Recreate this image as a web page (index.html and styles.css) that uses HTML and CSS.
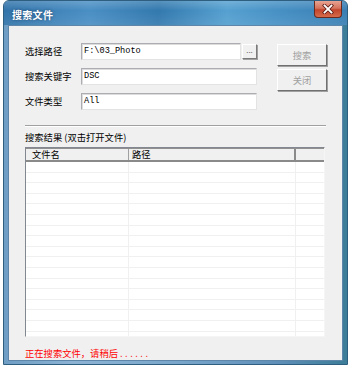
FILE: index.html
```html
<!DOCTYPE html>
<html>
<head>
<meta charset="utf-8">
<link rel="stylesheet" href="styles.css">
</head>
<body>
<div class="window">
  <div class="titlebar">
    <span class="title">搜索文件</span>
    <div class="close">
      <svg width="14" height="10" viewBox="0 0 14 10">
        <path d="M3.5 1.5 L10.5 8.5 M10.5 1.5 L3.5 8.5" stroke="#5a1a14" stroke-width="3.4" stroke-linecap="square"/>
        <path d="M3.5 1.5 L10.5 8.5 M10.5 1.5 L3.5 8.5" stroke="#ffffff" stroke-width="1.8" stroke-linecap="square"/>
      </svg>
    </div>
  </div>
  <div class="client">
    <div class="form">
      <div class="fields">
        <label class="lbl">选择路径</label>
        <div class="pathrow">
          <div class="input short">F:\03_Photo</div>
          <div class="browse">...</div>
        </div>
        <label class="lbl">搜索关键字</label>
        <div class="input">DSC</div>
        <label class="lbl">文件类型</label>
        <div class="input">All</div>
      </div>
      <div class="buttons">
        <div class="btn">搜索</div>
        <div class="btn">关闭</div>
      </div>
    </div>
    <div class="sep"></div>
    <div class="reslabel">搜索结果 (双击打开文件)</div>
    <div class="table">
      <div class="thead">
        <div class="th c1">文件名</div>
        <div class="th c2">路径</div>
        <div class="th c3"></div>
      </div>
      <div class="tbody">
        <div class="tr"><div class="td c1"></div><div class="td c2"></div><div class="td c3"></div></div>
        <div class="tr"><div class="td c1"></div><div class="td c2"></div><div class="td c3"></div></div>
        <div class="tr"><div class="td c1"></div><div class="td c2"></div><div class="td c3"></div></div>
        <div class="tr"><div class="td c1"></div><div class="td c2"></div><div class="td c3"></div></div>
        <div class="tr"><div class="td c1"></div><div class="td c2"></div><div class="td c3"></div></div>
        <div class="tr"><div class="td c1"></div><div class="td c2"></div><div class="td c3"></div></div>
        <div class="tr"><div class="td c1"></div><div class="td c2"></div><div class="td c3"></div></div>
        <div class="tr"><div class="td c1"></div><div class="td c2"></div><div class="td c3"></div></div>
        <div class="tr"><div class="td c1"></div><div class="td c2"></div><div class="td c3"></div></div>
        <div class="tr"><div class="td c1"></div><div class="td c2"></div><div class="td c3"></div></div>
        <div class="tr"><div class="td c1"></div><div class="td c2"></div><div class="td c3"></div></div>
        <div class="tr"><div class="td c1"></div><div class="td c2"></div><div class="td c3"></div></div>
        <div class="tr"><div class="td c1"></div><div class="td c2"></div><div class="td c3"></div></div>
        <div class="tr"><div class="td c1"></div><div class="td c2"></div><div class="td c3"></div></div>
        <div class="tr"><div class="td c1"></div><div class="td c2"></div><div class="td c3"></div></div>
        <div class="tr"><div class="td c1"></div><div class="td c2"></div><div class="td c3"></div></div>
        <div class="tr"><div class="td c1"></div><div class="td c2"></div><div class="td c3"></div></div>
      </div>
    </div>
    <div class="status">正在搜索文件，请稍后<span class="dots">......</span></div>
  </div>
</div>
</body>
</html>
```
FILE: styles.css
```css
* { box-sizing: border-box; }
body {
  margin: 0;
  background: #ffffff;
  font-family: "Noto Sans CJK SC", "Liberation Sans", sans-serif;
  font-size: 9.3px;
  color: #000;
}
.window {
  margin-left: 3px;
  width: 345px;
  height: 365px;
  border: 1px solid #2e5f80;
  border-radius: 6px 6px 0 0;
  background: linear-gradient(to right, #6f9dc4 0%, #8db3d3 20%, #7aa6cb 50%, #5f8fb8 80%, #3c7d98 100%);
  padding: 0 4px 3px 4px;
  display: flex;
  flex-direction: column;
}
.titlebar {
  height: 24px;
  margin: 0 -4px;
  padding: 0 4px 0 8px;
  border-radius: 5px 5px 0 0;
  background:
    linear-gradient(to bottom, rgba(255,255,255,0.18), rgba(255,255,255,0) 40%, rgba(255,255,255,0.08)),
    linear-gradient(to right, #3274aa 0%, #4a8fc4 25%, #3379ae 45%, #55a0d0 65%, #4690c4 80%, #3a7fb3 100%);
  display: flex;
  align-items: center;
  justify-content: space-between;
}
.title {
  color: #ffffff;
  font-weight: bold;
  font-size: 10px;
  letter-spacing: 0.3px;
  text-shadow: 0 0 3px rgba(20,50,90,0.8);
  margin-top: 2px;
}
.close {
  align-self: flex-start;
  width: 28px;
  height: 17px;
  margin-right: 1px;
  border: 1px solid #6a2a20;
  border-top: none;
  border-radius: 0 0 4px 4px;
  background: linear-gradient(to bottom, #e8a493 0%, #d4735c 45%, #c2452c 55%, #d66b4c 100%);
  display: flex;
  align-items: center;
  justify-content: center;
}
.close svg { display: block; }
.client {
  flex: 1;
  background: #f0f0f0;
  border: 1px solid #5d86a8;
  padding: 17px 0 0 16px;
  display: flex;
  flex-direction: column;
}
.form {
  display: flex;
  align-items: flex-start;
}
.fields {
  display: grid;
  grid-template-columns: 56px 176px;
  grid-auto-rows: 17px;
  row-gap: 8px;
  align-items: center;
}
.lbl { line-height: 17px; }
.pathrow {
  display: flex;
  align-items: center;
  justify-content: space-between;
}
.input {
  height: 17px;
  background: #ffffff;
  border: 1px solid #e3e3e3;
  border-top-color: #abadb3;
  border-left-color: #abadb3;
  box-shadow: inset 1px 1px 0 #dcdcdc;
  font-family: "Liberation Mono", monospace;
  font-size: 8.6px;
  line-height: 15px;
  padding-left: 2px;
  width: 176px;
}
.input.short { width: 160px; }
.browse {
  width: 15px;
  height: 15px;
  background: #f0f0f0;
  border: 1px solid;
  border-color: #ffffff #7a7a7a #7a7a7a #ffffff;
  box-shadow: 1px 1px 0 #a0a0a0;
  font-size: 8px;
  line-height: 9px;
  text-align: center;
  color: #666;
}
.buttons {
  margin-left: 20px;
  margin-top: 1px;
  display: flex;
  flex-direction: column;
  gap: 3px;
}
.btn {
  width: 50px;
  height: 22px;
  border: 1px solid;
  border-color: #ffffff #707070 #707070 #ffffff;
  box-shadow: 1px 1px 0 #a0a0a0;
  color: #a0a0a0;
  text-align: center;
  line-height: 20px;
  font-size: 9.3px;
}
.sep {
  margin-top: 15px;
  width: 301px;
  height: 2px;
  border-top: 1px solid #a0a0a0;
  border-bottom: 1px solid #ffffff;
}
.reslabel {
  margin-top: 3px;
  line-height: 14px;
  height: 15px;
}
.table {
  margin-top: 2px;
  width: 300px;
  height: 190px;
  background: #ffffff;
  border: 1px solid;
  border-color: #828790 #f5f5f5 #f5f5f5 #828790;
  display: flex;
  flex-direction: column;
  overflow: hidden;
}
.thead {
  display: flex;
  height: 14px;
  background: #f0f0f0;
  border-top: 1px solid #909090;
  border-bottom: 2px solid #8a8a8a;
}
.th {
  line-height: 11px;
  padding-left: 6px;
}
.c1 { width: 103px; }
.c2 { width: 167px; }
.c3 { flex: 1; }
.thead .c1 { border-right: 1px solid #a0a0a0; }
.thead .c2 { border-right: 2px solid #8a8a8a; padding-left: 3px; }
.tbody { flex: 1; display: flex; flex-direction: column; }
.tr {
  display: flex;
  height: 10.6px;
  border-bottom: 1px solid #f0f0f0;
}
.td.c1, .td.c2 { border-right: 1px solid #f0f0f0; }
.status {
  margin-top: 9px;
  color: #ff0000;
  line-height: 14px;
}
.dots {
  letter-spacing: 2.5px;
  margin-left: 2px;
}
```
